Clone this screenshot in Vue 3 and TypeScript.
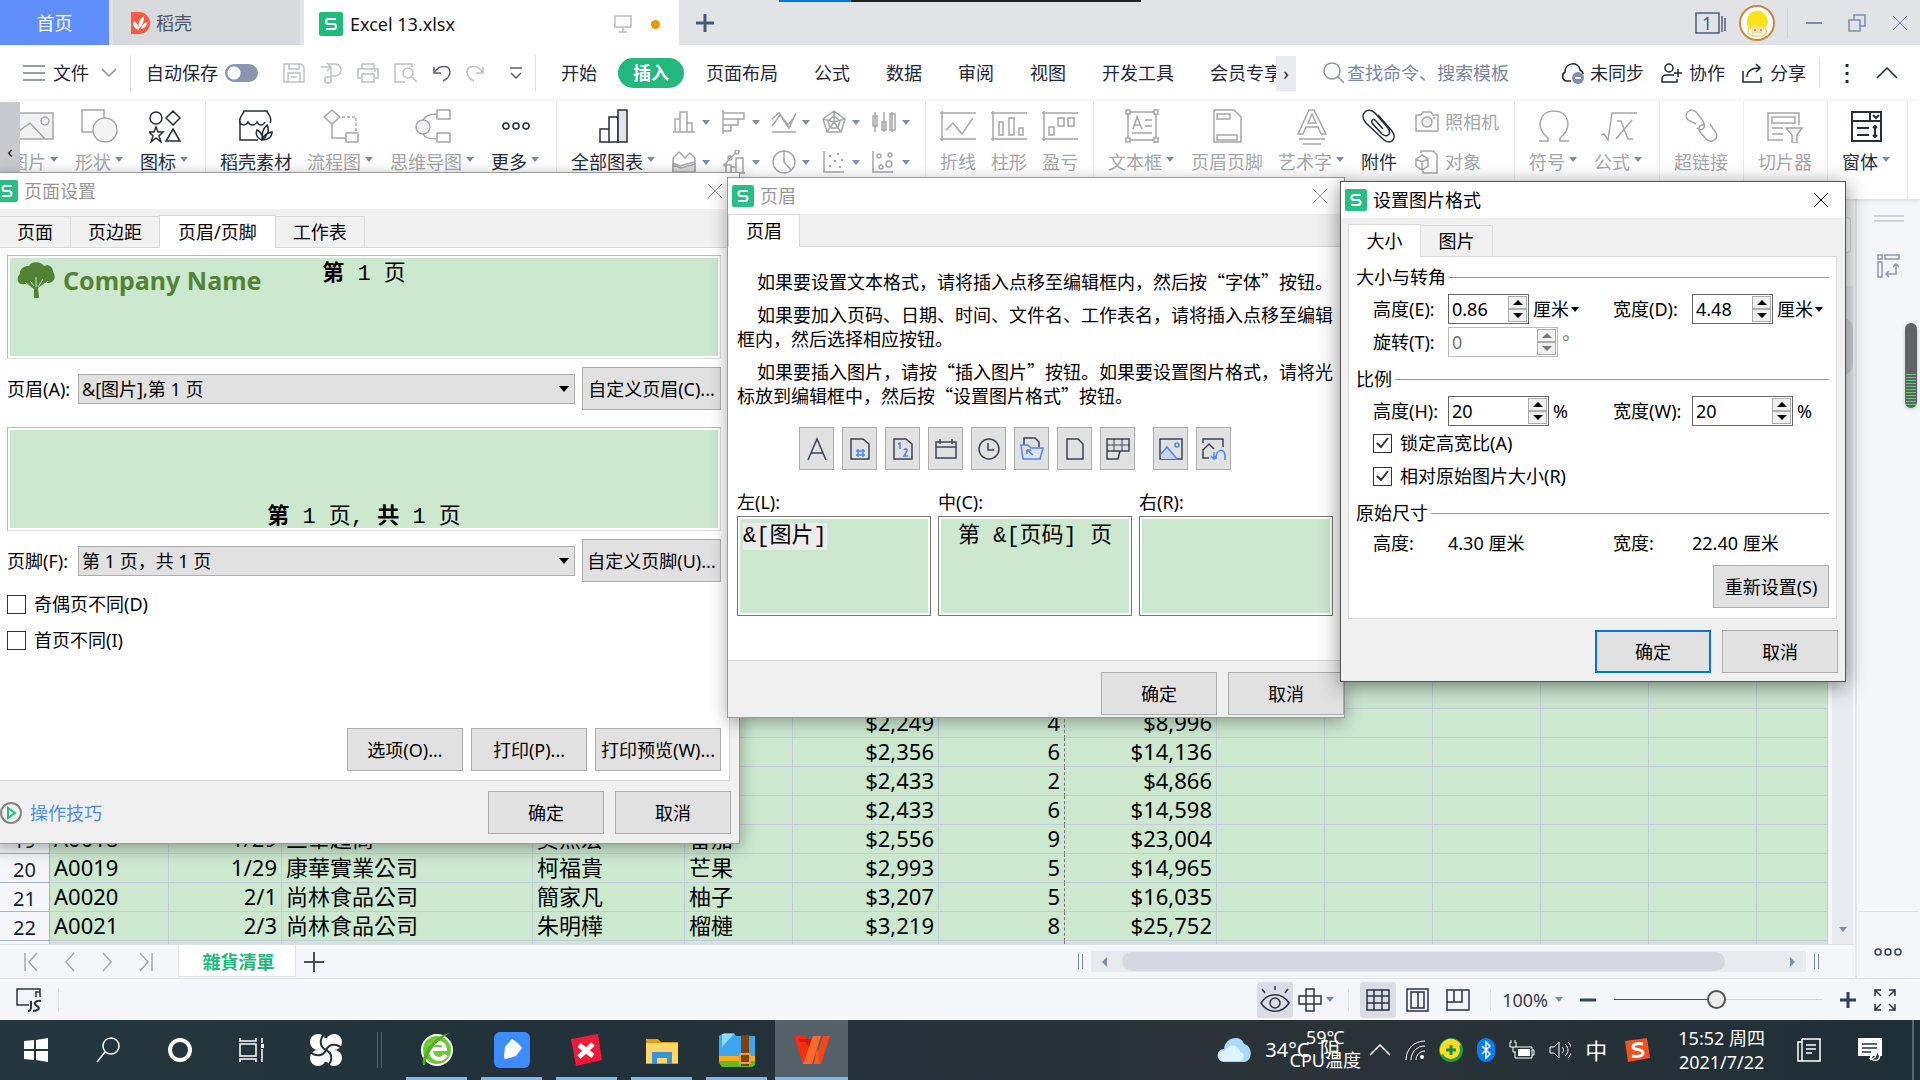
<script setup lang="ts">
import { h, ref, type FunctionalComponent } from 'vue'

type IconDef = [number, number, string]

const icons: Record<string, IconDef> = {
  wps: [24, 24, '<rect width="24" height="24" rx="2" fill="#20bb7c" stroke="none"/><path d="M17 7H9.500a2.500 2.500 0 0 0 0 5h5a2.500 2.500 0 0 1 0 5H7" stroke="#fff" stroke-width="2"/>'],
  wpsS: [22, 22, '<rect width="22" height="22" rx="2" fill="#27c084" stroke="none"/><path d="M16 6H9a2 2 0 0 0 0 5h4a2 2 0 0 1 0 5H6" stroke="#fff" stroke-width="2"/>'],
  docer: [20, 22, '<path d="M1 0h8a11 11 0 0 1 0 22H1z" fill="#fa5a41" stroke="none"/><path d="M9 18C2 16 3 11 4 9c3 2 5 5 5 9zM9 16c-1-5 0-9 5-12 0 5-1 9-4 12zM11 17c1-4 3-6 6-7 0 4-2 6-6 7z" fill="#fff" stroke="none"/>'],
  monitor: [18, 18, '<path d="M1 1h16v11H1zM9 12v5M5 17h8" stroke="#b3bdd4"/>'],
  plus: [20, 20, '<path d="M10 1v18M1 10h18" stroke="#4a5675" stroke-width="3"/>'],
  windows1: [32, 22, '<path d="M1 1h23v20H1zM27 4v16M30 6v13" stroke="#4f5f7f"/>'],
  avatar: [36, 36, '<circle cx="18" cy="18" r="17" fill="#fff" stroke="#c8893d" stroke-width="2"/><path d="M8 20c-2-18 20-20 21-2l-4 6H11z" fill="#ffe11a" stroke="none"/><path d="M12 21l13 1-1 7H13z" fill="#f8dfb0" stroke="none"/><path d="M10 22l-1 6 5 3h10l4-4-2-5" stroke="#e7d878"/><circle cx="16" cy="25" r="1" fill="#b85" stroke="none"/><circle cx="22" cy="25" r="1" fill="#b85" stroke="none"/>'],
  min: [16, 18, '<path d="M0 9h16" stroke="#7c8baa" stroke-width="2"/>'],
  restore: [18, 18, '<path d="M1 6h11v11H1zM6 6V1h11v11h-5" stroke="#7c8baa"/>'],
  close: [16, 16, '<path d="M1 1l14 14M15 1L1 15" stroke-width="1"/>'],
  menu: [22, 16, '<path d="M0 1h22M0 8h22M0 15h22" stroke="#333b4c" stroke-width="1"/>'],
  chevDown: [16, 10, '<path d="M1 1l7 7 7-7"/>'],
  chevUp: [22, 12, '<path d="M1 11L11 1l10 10"/>'],
  save: [22, 20, '<path d="M1 1h17l3 3v15H1zM6 1v5h10V1M5 19v-9h12v9M8 14h6"/>'],
  convert: [22, 22, '<path d="M1 5h9M7 1l4 4-4 4M8 2h7a6 6 0 0 1 0 12h-4v4a3 3 0 1 1-3-3h3V6"/>'],
  print: [22, 20, '<path d="M5 6V1h12v5M4 15H1V6h20v9h-3M5 11h12v8H5zM17 8h2"/>'],
  preview: [24, 20, '<path d="M18 4V1H1v18h10"/><circle cx="14" cy="10" r="5"/><path d="M18 14l5 5"/>'],
  undo: [18, 18, '<path d="M1 3v6h7M1 9C5 1 17 0 17 8c0 4-3 7-7 9"/>'],
  redo: [18, 18, '<path d="M17 3v6h-7M17 9C13 1 1 0 1 8c0 4 3 7 7 9"/>'],
  more: [12, 12, '<path d="M0 1h12M1 6l5 5 5-5"/>'],
  search: [22, 22, '<circle cx="9" cy="9" r="8"/><path d="M15 15l6 6"/>'],
  cloud: [24, 22, '<path d="M11 19H6a5 5 0 0 1-1-9C5 0 19-1 20 8c2 1 3 3 3 4"/><circle cx="18" cy="16" r="6" fill="#7f8ea9" stroke="none"/><path d="M15 16h6" stroke="#fff" stroke-width="2"/>'],
  coop: [22, 20, '<circle cx="8" cy="5" r="4"/><path d="M13 12H5a4 4 0 0 0-4 4v3h15v-3M17 6v8M13 10h8"/>'],
  share: [22, 20, '<path d="M1 8v11h18v-5M5 14c0-6 4-9 13-9M14 1l4 4-4 4"/>'],
  dots: [4, 20, '<path d="M2 1v3M2 9v3M2 17v3" stroke-width="3"/>'],
  pic: [44, 34, '<path d="M1 4h39v26H1zM1 26l16-12 15 16" fill="#f1f1f1"/><circle cx="32" cy="12" r="4"/>'],
  shape: [38, 34, '<path d="M1 1h22v22H1z"/><circle cx="24" cy="21" r="12" fill="#f4f4f4"/>'],
  glyphs: [32, 34, '<circle cx="7" cy="9" r="6"/><path d="M24 2l7 7-7 7-7-7zM7 18l2 5h5l-4 4 2 6-5-4-5 4 2-6-4-4h5zM24 20l7 12H17z"/>'],
  store: [36, 34, '<path d="M2 15V31h18M2 15c-2-7 3-9 4-13h23c1 4 6 6 3 12M2 12c0 5 6 5 8 1 2 4 7 4 9 0 2 4 6 4 8 0M24 31c-7-3-6-8-5-10 4 2 6 5 5 10 0-5 0-11 5-15 3 5 0 12-5 15 1-4 4-7 10-8 0 5-4 8-10 8z"/>'],
  flow: [36, 34, '<path d="M9 1l8 7-8 7-8-7z" fill="#f1f1f1"/><path d="M19 8h14v15" stroke-dasharray="3 2"/><path d="M9 15v14h14M23 24h12v9H23z"/>'],
  mind: [36, 34, '<circle cx="8" cy="18" r="7" fill="#f1f1f1"/><path d="M22 1h13v9H22zM22 24h13v9H22zM8 11c2-4 7-6 14-6M8 25c2 4 7 5 14 5"/>'],
  ooo: [28, 34, '<circle cx="4" cy="17" r="3"/><circle cx="14" cy="17" r="3"/><circle cx="24" cy="17" r="3"/>'],
  charts: [30, 34, '<path d="M1 20h9v13H1zM10 8h9v25h-9z"/><path d="M19 1h9v32h-9z" fill="#e2e4e9"/>'],
  s1: [24, 24, '<path d="M1 22h22M3 22V9h5v13M8 22V2h7v20M15 22v-9h5v9"/>'],
  s2: [24, 24, '<path d="M1 0v24M1 3h21v6H1M1 9h15v6H1M1 15h8v6H1"/>'],
  s3: [24, 24, '<path d="M0 16l8-11 9 13 7-15M0 9l7-6 9 12 7-9M0 22h24"/>'],
  s4: [24, 24, '<path d="M12 1l11 8-4 13H5L1 9zM12 6l6 5-2 7H8l-2-7zM12 1v11M23 9l-11 3M19 22l-7-10M5 22l7-10M1 9l11 3"/>'],
  s5: [24, 24, '<path d="M3 2v20M1 6h4v10H1zM12 2v20M10 12h4v8h-4zM20 2v20M18 4h5v16h-5z"/>'],
  s6: [24, 24, '<path d="M1 22V8l6-6 6 6 5-5 5 5v14zM1 13l7 3 7-2 8-2"/><path d="M1 15l8 3 14-4v8H1z" fill="#ddd"/>'],
  s7: [24, 24, '<path d="M2 16L8 8l6-5M1 23h22M4 23v-8h5v8M9 23v-6h5v6M14 23V8h7v15"/><circle cx="3" cy="15" r="1"/><circle cx="8" cy="8" r="2"/><circle cx="15" cy="2" r="2"/>'],
  s8: [24, 24, '<circle cx="12" cy="12" r="11"/><path d="M12 1v11l7 8"/>'],
  s9: [24, 24, '<path d="M2 1v21h20"/><path d="M7 6h2M15 4h2M12 11h2M19 10h2M7 16h2M17 17h2" stroke-width="2"/>'],
  s10: [24, 24, '<path d="M1 1v21h20"/><circle cx="7" cy="6" r="2"/><circle cx="18" cy="5" r="2"/><circle cx="9" cy="17" r="2"/><circle cx="17" cy="14" r="3"/>'],
  line: [36, 34, '<path d="M0 4h36M0 30h36M2 2v30M6 21l7-7 9 11L33 9"/>'],
  column: [36, 34, '<path d="M0 4h36M0 30h36M2 2v30M8 26V13h4v13zM18 26V9h5v17zM28 26v-7h4v7z"/>'],
  winloss: [36, 34, '<path d="M0 4h36M0 30h36M2 2v30M7 18h5v8H7zM16 9h6v8h-6zM26 9h6v8h-6z"/>'],
  textbox: [34, 34, '<path d="M5 3h24M5 31h24M3 5v24M31 5v24M8 20l4-12 5 12M9 16h6M20 11h7M20 17h7M7 24h20"/><path d="M1 1h4v4H1zM29 1h4v4h-4zM1 29h4v4H1zM29 29h4v4h-4z" fill="#fff"/>'],
  hf: [30, 34, '<path d="M2 1h20l7 7v25H2zM5 5h13v5H5zM5 26h20v5H5z"/>'],
  art: [32, 36, '<path d="M2 25L13 1h5l12 24h-5l-3-7H10l-3 7zM12 14h8l-4-9zM3 30h26M7 35h18"/>'],
  clip: [36, 34, '<path d="M17 6l14 16c6 8-2 15-9 8L5 14C-3 5 7-3 14 4l13 15c4 6-1 10-6 6L11 14c-1-3 1-4 3-3l8 9"/>'],
  camera: [24, 24, '<path d="M1 5h5l2-3h8l2 3h5v16H1z"/><circle cx="12" cy="12" r="5" fill="#eee"/><path d="M18 8h2"/>'],
  object: [24, 24, '<path d="M6 3V1h12l4 4v18H8v-2M1 9l6-4 6 4v7l-6 4-6-4zM1 9l6 3 6-3M7 12v8"/>'],
  omega: [32, 34, '<path d="M1 32h9v-3C-3 19 1 2 16 2s19 17 6 27v3h9"/>'],
  formula: [36, 34, '<path d="M0 26l3-1 4 6L11 4h25M16 12h4l7 18h5M31 11L15 30"/>'],
  link: [34, 34, '<path d="M12 15L4 11C-2 4 8-3 13 4l6 8c4 7-2 11-6 7M21 16c-6-1-8 4-4 8l5 6c5 5 13 0 10-6l-6-9"/>'],
  slicer: [36, 34, '<path d="M16 31H1V4h31v12M5 8h23v6H5zM5 19h11M5 25h11"/><path d="M19 19h16l-5 7v8h-5v-8z" fill="#f1f1f1"/>'],
  form: [32, 34, '<path d="M1 3h29v29H1zM1 12h29M19 3v9M6 19h12M6 26h12M24 17v11M22 19l2-2 2 2M22 26l2 2 2-2M22 6l3 3 3-3" stroke-width="2"/>'],
  bA: [24, 24, '<path d="M3 23L12 2l9 21M6 16h12"/>'],
  bPage: [24, 24, '<path d="M3 2h12l6 5v15H3z"/><path d="M8 14h9M8 18h9M10 12v8M15 12v8" stroke="#4a86f7"/>'],
  bPages: [24, 24, '<path d="M3 2h12l6 5v15H3z"/><path d="M7 7l2-1v6M13 13c1-2 4-1 3 1l-3 5h4" stroke="#4a86f7"/>'],
  bDate: [24, 24, '<path d="M2 5h20v16H2zM2 10h20M6 2v5M18 2v5"/>'],
  bTime: [24, 24, '<circle cx="12" cy="12" r="10"/><path d="M11 6v7h6"/>'],
  bPath: [24, 24, '<path d="M4 8V1h11l4 4v5"/><path d="M1 8h7l3 3h12l-3 11H3zM7 13l6 5M7 13v4M7 13h4" stroke="#4a86f7"/>'],
  bFile: [24, 24, '<path d="M4 2h11l5 5v15H4z"/>'],
  bSheet: [24, 24, '<path d="M1 14V2h22v12h-9l-2 8H1v-8h22"/><path d="M1 8h22M8 2v12M16 2v12" stroke-width="1"/>'],
  bPic: [24, 24, '<path d="M1 2h22v20H1z"/><path d="M2 17l6-7 10 12H2z" stroke="none" fill="#c9d5ea"/><path d="M2 17l6-7 10 12" stroke="#4a86f7"/><circle cx="18" cy="8" r="2" stroke="#4a86f7"/>'],
  bFmt: [24, 24, '<path d="M1 6V2h20v8M1 12v9h6M1 13l6-6 5 5"/><path d="M12 15v7M9 19l3 3 2-3M14 22c0-11 9-11 9-3v4" stroke="#4a86f7"/>'],
  tree: [38, 36, '<path d="M17 36h5l-1-10 7-5c9 1 12-6 8-11 0-6-5-8-9-6-3-5-13-5-15 0C6 3 2 9 3 12c-5 5-2 12 6 10l8 5z" fill="#548235" stroke="none"/><path d="M8 20l9 8M31 19l-10 9M19 15v10M13 19l4 5M26 17l-5 8" stroke="#cce8cf" stroke-width="1"/>'],
  tips: [22, 22, '<circle cx="11" cy="11" r="10" stroke="#858585" stroke-width="2"/><path d="M8 6v10l7-5z" stroke="#27bd83" stroke-width="2"/>'],
  lines: [30, 8, '<path d="M0 1h30M0 6h30" stroke="#d0d3d8" stroke-width="2"/>'],
  swap: [24, 24, '<path d="M1 1h4v4H1zM8 1h14v4H8zM1 8h4v15H1zM19 10v10h-9M16 13l3-3 3 3M12 17l-3 3 3 3" stroke="#8d9ab0"/>'],
  first: [14, 20, '<path d="M1 1v18M13 1L5 10l8 9"/>'],
  prev: [10, 20, '<path d="M9 1L1 10l8 9"/>'],
  next: [10, 20, '<path d="M1 1l8 9-8 9"/>'],
  last: [14, 20, '<path d="M13 1v18M1 1l8 9-8 9"/>'],
  add: [20, 20, '<path d="M10 0v20M0 10h20" stroke-width="2"/>'],
  js: [26, 24, '<path d="M13 17H1V1h23v8M20 9V4h4"/><path d="M15 13v6c0 3-1 4-3 4M25 13c-6-1-8 3-4 5s1 5-4 5" stroke-width="2"/>'],
  eye: [30, 30, '<path d="M1 18c7-11 21-11 28 0-7 11-21 11-28 0z"/><circle cx="15" cy="18" r="5"/><path d="M15 1v4M2 4l3 4M28 4l-3 4"/>'],
  cross: [24, 24, '<path d="M8 1h8v22H8zM1 8h22v8H1z"/>'],
  table: [24, 22, '<path d="M1 1h22v20H1zM1 7h22M1 14h22M8 1v20M16 1v20"/>'],
  page: [24, 24, '<path d="M1 1h21v22H1zM5 4h13v16H5zM12 4v16"/>'],
  breaks: [24, 22, '<path d="M1 1h22v20H1zM1 13h15V1M8 1v12"/>'],
  minus: [16, 18, '<path d="M0 9h16" stroke="#34405b" stroke-width="3"/>'],
  zoomIn: [16, 18, '<path d="M0 9h16M8 1v16" stroke="#34405b" stroke-width="3"/>'],
  expand: [22, 22, '<path d="M1 7V1h6M1 1l6 6M15 1h6v6M21 1l-6 6M1 15v6h6M1 21l6-6M21 15v6h-6M21 21l-6-6"/>'],
  win: [24, 24, '<path d="M0 3l10-1v9H0zM12 2l12-2v11H12zM0 13h10v9L0 21zM12 13h12v11l-12-2z" fill="#fff" stroke="none"/>'],
  find: [24, 26, '<circle cx="15" cy="9" r="8"/><path d="M9 15L1 25"/>'],
  cortana: [24, 24, '<circle cx="12" cy="12" r="10" stroke-width="4"/>'],
  task: [26, 26, '<path d="M1 1v3h16V1M1 7h16v12H1zM1 25v-3h16v3M23 1v5M23 12v13"/><path d="M22 7h3v4h-3z" fill="#fff" stroke="none"/>'],
  pinwheel: [34, 34, '<g fill="#fff" stroke="none"><circle cx="9" cy="9" r="8"/><circle cx="25" cy="9" r="8"/><circle cx="9" cy="25" r="8"/><circle cx="25" cy="25" r="8"/><path d="M9 5h16v24H9z"/></g><g stroke="#24323a" stroke-width="2"><path id="a" d="M17 17C9 13 11 4 17 0M17 17C21 9 30 11 34 17M17 17C25 21 23 30 17 34M17 17C13 25 4 23 0 17"/></g>'],
  ie: [34, 36, '<circle cx="17" cy="18" r="15" fill="#6cc932" stroke="#fff" stroke-width="2"/><path d="M26 23c-5 7-15 4-15-5 0-10 14-9 14-1H12" stroke="#fff" stroke-width="4"/><path d="M3 33C1 20 16 2 31 1c-10 4-23 16-26 32z" fill="#55ad20" stroke="none"/>'],
  blue: [36, 36, '<rect width="36" height="36" rx="6" fill="#3c8cff" stroke="none"/><path d="M18 7c5 3 8 6 10 9l-6 8-10 3c-2 0-2-1-2-3l1-9z" fill="#fff" stroke="none"/>'],
  red: [34, 34, '<path d="M1 6l27-5 4 26-26 6z" fill="#f01937" stroke="none"/><path d="M9 12l14 11M23 11L9 24" stroke="#fff" stroke-width="5"/>'],
  folder: [34, 28, '<path d="M1 3h12l3 3h17v22H1z" fill="#e39b12" stroke="none"/><path d="M1 7h32v20H1z" fill="#ffd768" stroke="none"/><path d="M7 28V16h20v12h-5v-6H12v6z" fill="#3a93d8" stroke="none"/>'],
  zip: [36, 36, '<path d="M0 27h36v6l-3 2H3l-3-4z" fill="#61b925" stroke="none"/><path d="M0 23h36v6H0z" fill="#ffad16" stroke="none"/><path d="M0 4l5-3h10l2 3h19v20H0z" fill="#3ca7ec" stroke="none"/><path d="M3 2h12L3 15z" fill="#8ddcff" stroke="none"/><path d="M22 3h8v31h-8z" fill="#80400f" stroke="none"/><path d="M21 22h10v9H21z" stroke="#dba446" stroke-width="2"/>'],
  wpsW: [36, 30, '<path d="M0 1h12l5 12-4 16H9z" fill="#f52e12" stroke="none"/><path d="M5 4h12l4 9-4 2-6-8H6z" fill="#d81c0a" stroke="none"/><path d="M9 29L19 1h8l-9 28z" fill="#ff6a2a" stroke="none"/><path d="M20 29L29 1h7L27 29z" fill="#f9431a" stroke="none"/><path d="M23 12l3 17h-6z" fill="#ff5a21" stroke="none"/>'],
  weather: [34, 26, '<path d="M7 25c-9-1-8-13 0-13C8 0 24-3 27 7c9 2 9 17 0 18z" fill="#a9daf6" stroke="none"/><path d="M5 24c-6-2-4-11 3-10 2-6 13-8 15 1 6 2 4 8 0 9z" fill="#ddf4ff" stroke="none"/>'],
  wifi: [20, 20, '<path d="M1 20C1 9 9 1 20 1M6 20c0-8 6-14 14-14M11 20c0-5 4-9 9-9" stroke-width="1"/><circle cx="17" cy="17" r="2" fill="#fff" stroke="none"/>'],
  guard: [24, 24, '<circle cx="12" cy="12" r="12" fill="#1c9f54" stroke="none"/><path d="M2 17A11 11 0 1 1 22 7L2 17z" fill="#ffdc1f" stroke="none"/><circle cx="12" cy="12" r="9" fill="#ffdc1f" stroke="none"/><path d="M12 7v10M7 12h10" stroke="#17894a" stroke-width="3"/>'],
  bt: [18, 24, '<rect width="18" height="24" rx="9" fill="#0a7cf2" stroke="none"/><path d="M5 8l8 8-4 4V4l4 4-8 8" stroke="#fff"/>'],
  battery: [26, 20, '<path d="M7 7h16v11H6v-6M23 10h2v5h-2M1 2v5h6V2M2 0v3M6 0v3M4 7v5h3" stroke-width="1"/><path d="M9 9h12v7H9z" fill="#fff" stroke="none"/>'],
  speaker: [22, 20, '<path d="M1 7h4l5-5v16l-5-5H1zM13 7c2 2 2 4 0 6M16 4c4 4 4 8 0 12M19 2c5 5 5 11 0 16" stroke-width="1"/>'],
  sogou: [26, 24, '<path d="M1 3l22-3 3 20-22 4z" fill="#f4501e" stroke="none"/><path d="M19 6c-6-1-10 0-10 3 0 4 10 1 10 6 0 3-5 4-11 3" stroke="#fff" stroke-width="3"/>'],
  notes: [24, 24, '<path d="M5 1h18v22H1V4h4M5 1v22M9 7h10M9 11h10M9 15h6"/>'],
  action: [26, 26, '<path d="M0 1h24v18h-9l-3 5v-5H0z" fill="#fff" stroke="none"/><path d="M4 7h15M4 11h15M4 15h9" stroke="#24323a"/><path d="M18 14c1 5-1 8-5 8 6 4 13-2 5-8z" fill="#24323a" stroke="#fff"/>'],
}

const Ic: FunctionalComponent<{ n: string }> = ({ n }) => {
  const [w, ht, inner] = icons[n]
  return h('svg', {
    width: w, height: ht, viewBox: `0 0 ${w} ${ht}`, fill: 'none', stroke: 'currentColor',
    'stroke-width': 1.5, 'aria-hidden': 'true', style: { display: 'block', flex: 'none' }, innerHTML: inner,
  })
}
Ic.props = ['n']

const menus = ['开始', '插入', '页面布局', '公式', '数据', '审阅', '视图', '开发工具']

interface Tool { k: 'item' | 'sep' | 'charts' | 'pair'; n?: string; t?: string; on?: boolean; c?: boolean }
const sep: Tool = { k: 'sep' }
const item = (n: string, t: string, c = false, on = false): Tool => ({ k: 'item', n, t, c, on })
const tools: Tool[] = [
  item('pic', '图片', true), item('shape', '形状', true), item('glyphs', '图标', true, true), sep,
  item('store', '稻壳素材', false, true), item('flow', '流程图', true), item('mind', '思维导图', true),
  item('ooo', '更多', true, true), sep,
  item('charts', '全部图表', true, true), { k: 'charts' }, sep,
  item('line', '折线'), item('column', '柱形'), item('winloss', '盈亏'), sep,
  item('textbox', '文本框', true), item('hf', '页眉页脚'), item('art', '艺术字', true),
  item('clip', '附件', false, true), { k: 'pair' }, sep,
  item('omega', '符号', true), item('formula', '公式', true), sep,
  item('link', '超链接'), sep, item('slicer', '切片器'), sep, item('form', '窗体', true, true), sep,
]
const smallCharts = ['s1', 's2', 's3', 's4', 's5', 's6', 's7', 's8', 's9', 's10']

const colWidths = [50, 119, 113, 251, 152, 108, 146, 126, 152, 108, 108, 108, 108, 108]
const known: Record<number, string[]> = {
  15: ['', '', '', '', '芝士', '$2,249', '4', '$8,996'],
  16: ['', '', '', '', '', '$2,356', '6', '$14,136'],
  17: ['', '', '', '', '', '$2,433', '2', '$4,866'],
  18: ['', '', '', '', '', '$2,433', '6', '$14,598'],
  19: ['A0018', '1/29', '三華超商', '吳杰宏', '番茄', '$2,556', '9', '$23,004'],
  20: ['A0019', '1/29', '康華實業公司', '柯福貴', '芒果', '$2,993', '5', '$14,965'],
  21: ['A0020', '2/1', '尚林食品公司', '簡家凡', '柚子', '$3,207', '5', '$16,035'],
  22: ['A0021', '2/3', '尚林食品公司', '朱明樺', '榴槤', '$3,219', '8', '$25,752'],
}
const rows = Array.from({ length: 23 }, (_, i) => ({
  no: i > 17 && i < 22 ? String(i + 1) : '',
  cells: Array.from({ length: 14 }, (_, c) => known[i + 1]?.[c] ?? ''),
}))
const rightCols = [1, 5, 6, 7]

const hfButtons = [
  ['bA', '字体'], ['bPage', '页码'], ['bPages', '总页数'], ['bDate', '日期'], ['bTime', '时间'],
  ['bPath', '路径'], ['bFile', '文件名'], ['bSheet', '工作表名'], ['bPic', '插入图片'], ['bFmt', '设置图片格式'],
]
const left = ref('&[图片]')
const center = ref('第 &[页码] 页')
const right = ref('')
const oddEven = ref(false)
const firstPage = ref(false)
const lockRatio = ref(true)
const relative = ref(true)
const zoom = ref(49)
const h1 = ref('0.86')
const w1 = ref('4.48')
const rot = ref('0')
const h2 = ref('20')
const w2 = ref('20')
const apps = ['ie', 'blue', 'red', 'folder', 'zip', 'wpsW']
</script>

<template>
  <div class="screen">
    <header class="tabs">
      <button class="tab home">首页</button>
      <button class="tab docer"><Ic n="docer" />稻壳</button>
      <div class="tab file"><Ic n="wps" /><span class="fname">Excel 13.xlsx</span><Ic n="monitor" /><i class="dirty"></i></div>
      <button class="newtab" aria-label="新建"><Ic n="plus" /></button>
      <div class="winctl">
        <span class="count"><Ic n="windows1" /><b>1</b></span>
        <Ic n="avatar" /><i class="vline"></i>
        <button aria-label="最小化"><Ic n="min" /></button>
        <button aria-label="还原"><Ic n="restore" /></button>
        <button aria-label="关闭"><Ic n="close" /></button>
      </div>
      <div class="strip"></div>
    </header>

    <nav class="menubar">
      <button class="filebtn"><Ic n="menu" />文件<span class="faint"><Ic n="chevDown" /></span></button>
      <i class="vline"></i>
      <label class="auto">自动保存<input type="checkbox" class="toggle" /></label>
      <div class="quick">
        <Ic n="save" /><Ic n="convert" /><Ic n="print" /><Ic n="preview" />
        <span class="dark"><Ic n="undo" /></span><Ic n="redo" /><span class="dark drop"><Ic n="more" /></span>
      </div>
      <i class="vline"></i>
      <div class="menus">
        <button v-for="m in menus" :key="m" :class="{ cur: m === '插入' }">{{ m }}</button>
        <button class="cut">会员专享</button>
      </div>
      <button class="scroll" aria-label="更多选项卡">›</button>
      <label class="find"><Ic n="search" /><input type="text" placeholder="查找命令、搜索模板" aria-label="查找命令" /></label>
      <div class="acct">
        <button><Ic n="cloud" />未同步</button>
        <button><Ic n="coop" />协作</button>
        <button><Ic n="share" />分享</button>
        <i class="vline"></i>
        <Ic n="dots" /><Ic n="chevUp" />
      </div>
    </nav>

    <section class="ribbon">
      <template v-for="(t, i) in tools" :key="i">
        <i v-if="t.k === 'sep'" class="rsep"></i>
        <button v-else-if="t.k === 'item'" class="tool" :class="{ on: t.on }">
          <span class="pic"><Ic :n="t.n!" /></span>
          <span class="lab">{{ t.t }}<i v-if="t.c" class="caret"></i></span>
        </button>
        <div v-else-if="t.k === 'charts'" class="small">
          <button v-for="s in smallCharts" :key="s" :aria-label="s"><Ic :n="s" /><i class="caret"></i></button>
        </div>
        <div v-else class="pair">
          <button><Ic n="camera" />照相机</button>
          <button><Ic n="object" />对象</button>
        </div>
      </template>
      <button class="rscroll" aria-label="向左">‹</button>
    </section>

    <main class="work">
      <div class="book">
        <div class="fbar"><div class="fbox"></div></div>
        <div class="gridrow">
          <div class="gridbox">
            <table class="grid">
              <colgroup><col v-for="(w, i) in colWidths" :key="i" :style="{ width: w + 'px' }" /><col /></colgroup>
              <thead><tr><th v-for="c in 15" :key="c"></th></tr></thead>
              <tbody>
                <tr v-for="(r, k) in rows" :key="k">
                  <th>{{ r.no }}</th>
                  <td v-for="(c, i) in r.cells" :key="i" :class="{ num: rightCols.includes(i), brk: i === 6 }">{{ c }}</td>
                </tr>
              </tbody>
            </table>
          </div>
          <div class="vscroll"><div class="vthumb"></div><i class="caret"></i></div>
        </div>
        <div class="sheets">
          <div class="snav"><Ic n="first" /><Ic n="prev" /><Ic n="next" /><Ic n="last" /></div>
          <button class="sheet">雜貨清單</button>
          <button class="addsheet" aria-label="新建工作表"><Ic n="add" /></button>
          <i class="grip"></i>
          <div class="hscroll"><i class="la"></i><div class="hthumb"></div><i class="ra"></i></div>
          <i class="grip end"></i>
        </div>
      </div>
      <aside class="side">
        <Ic n="lines" /><Ic n="swap" />
        <div class="sidefoot"><Ic n="ooo" /></div>
      </aside>
    </main>

    <footer class="status">
      <span class="js"><Ic n="js" /></span>
      <div class="views">
        <button class="sel" aria-label="护眼模式"><Ic n="eye" /></button>
        <button class="frz" aria-label="阅读模式"><Ic n="cross" /><i class="caret"></i></button>
        <i class="vline"></i>
        <button class="sel" aria-label="普通视图"><Ic n="table" /></button>
        <button class="vb" aria-label="页面布局"><Ic n="page" /></button>
        <button class="vb" aria-label="分页预览"><Ic n="breaks" /></button>
        <i class="vline"></i>
        <button class="pct">100%<i class="caret"></i></button>
        <button aria-label="缩小"><Ic n="minus" /></button>
        <input v-model="zoom" class="zoom" type="range" min="0" max="100" aria-label="缩放" />
        <button aria-label="放大"><Ic n="zoomIn" /></button>
        <button class="full" aria-label="全屏"><Ic n="expand" /></button>
      </div>
    </footer>

    <section class="dlg d1" aria-label="页面设置">
      <div class="title off"><Ic n="wpsS" /><span>页面设置</span><button aria-label="关闭"><Ic n="close" /></button></div>
      <div class="dtabs">
        <button>页面</button><button>页边距</button><button class="act">页眉/页脚</button><button>工作表</button>
      </div>
      <div class="body">
        <div class="pv">
          <div class="logo"><Ic n="tree" /><span>Company Name</span></div>
          <p class="mono"><b>第</b> 1 页</p>
        </div>
        <div class="field">
          <label for="hd">页眉(A):</label>
          <select id="hd"><option>&amp;[图片],第 1 页</option></select>
          <button class="btn wide">自定义页眉(C)...</button>
        </div>
        <div class="pv foot"><p class="mono"><b>第</b> 1 页, <b>共</b> 1 页</p></div>
        <div class="field">
          <label for="ft">页脚(F):</label>
          <select id="ft"><option>第 1 页，共 1 页</option></select>
          <button class="btn wide">自定义页脚(U)...</button>
        </div>
        <label class="chk"><input v-model="oddEven" type="checkbox" />奇偶页不同(D)</label>
        <label class="chk"><input v-model="firstPage" type="checkbox" />首页不同(I)</label>
        <div class="acts">
          <button class="btn">选项(O)...</button><button class="btn">打印(P)...</button><button class="btn mid">打印预览(W)...</button>
        </div>
      </div>
      <div class="dfoot">
        <a href="#"><Ic n="tips" />操作技巧</a>
        <button class="btn">确定</button><button class="btn">取消</button>
      </div>
    </section>

    <section class="dlg d2" aria-label="页眉">
      <div class="title off"><Ic n="wpsS" /><span>页眉</span><button aria-label="关闭"><Ic n="close" /></button></div>
      <div class="dtabs"><button class="act">页眉</button></div>
      <div class="body">
        <p>如果要设置文本格式，请将插入点移至编辑框内，然后按“字体”按钮。</p>
        <p>如果要加入页码、日期、时间、文件名、工作表名，请将插入点移至编辑框内，然后选择相应按钮。</p>
        <p>如果要插入图片，请按“插入图片”按钮。如果要设置图片格式，请将光标放到编辑框中，然后按“设置图片格式”按钮。</p>
        <div class="hfb">
          <button v-for="b in hfButtons" :key="b[0]" :class="{ gap: b[0] === 'bPic' }" :aria-label="b[1]"><Ic :n="b[0]" /></button>
        </div>
        <div class="areas">
          <label>左(L):<textarea v-model="left" class="picked"></textarea></label>
          <label>中(C):<textarea v-model="center" class="ctr"></textarea></label>
          <label>右(R):<textarea v-model="right"></textarea></label>
        </div>
      </div>
      <div class="dfoot"><button class="btn">确定</button><button class="btn">取消</button></div>
    </section>

    <section class="dlg d3" aria-label="设置图片格式">
      <div class="title"><Ic n="wpsS" /><span>设置图片格式</span><button aria-label="关闭"><Ic n="close" /></button></div>
      <div class="dtabs"><button class="act">大小</button><button>图片</button></div>
      <div class="body">
        <h3>大小与转角</h3>
        <div class="form">
          <label for="h1">高度(E):</label>
          <div class="cell">
            <span class="spin"><input id="h1" v-model="h1" type="text" /><span class="ud"><button aria-label="增加"></button><button aria-label="减少"></button></span></span>
            厘米<i class="caret blk"></i>
          </div>
          <label for="w1">宽度(D):</label>
          <div class="cell">
            <span class="spin"><input id="w1" v-model="w1" type="text" /><span class="ud"><button aria-label="增加"></button><button aria-label="减少"></button></span></span>
            厘米<i class="caret blk"></i>
          </div>
          <label for="rot">旋转(T):</label>
          <div class="cell">
            <span class="spin dis"><input id="rot" v-model="rot" type="text" disabled /><span class="ud"><button aria-label="增加" disabled></button><button aria-label="减少" disabled></button></span></span>
            <span class="deg">°</span>
          </div>
        </div>
        <h3>比例</h3>
        <div class="form tight">
          <label for="h2">高度(H):</label>
          <div class="cell">
            <span class="spin pc"><input id="h2" v-model="h2" type="text" /><span class="ud"><button aria-label="增加"></button><button aria-label="减少"></button></span></span>%
          </div>
          <label for="w2">宽度(W):</label>
          <div class="cell">
            <span class="spin pc"><input id="w2" v-model="w2" type="text" /><span class="ud"><button aria-label="增加"></button><button aria-label="减少"></button></span></span>%
          </div>
        </div>
        <label class="chk"><input v-model="lockRatio" type="checkbox" />锁定高宽比(A)</label>
        <label class="chk"><input v-model="relative" type="checkbox" />相对原始图片大小(R)</label>
        <h3 class="orig">原始尺寸</h3>
        <div class="form"><span>高度:</span><span>4.30 厘米</span><span>宽度:</span><span>22.40 厘米</span></div>
        <button class="btn reset">重新设置(S)</button>
      </div>
      <div class="dfoot"><button class="btn def">确定</button><button class="btn">取消</button></div>
    </section>

    <div class="meter"><div></div></div>

    <footer class="taskbar">
      <button class="tb" aria-label="开始"><Ic n="win" /></button>
      <button class="tb" aria-label="搜索"><Ic n="find" /></button>
      <button class="tb" aria-label="Cortana"><Ic n="cortana" /></button>
      <button class="tb" aria-label="任务视图"><Ic n="task" /></button>
      <button class="tb" aria-label="浏览器"><Ic n="pinwheel" /></button>
      <i class="tsep"></i>
      <button v-for="a in apps" :key="a" class="app" :class="{ cur: a === 'wpsW' }" :aria-label="a"><Ic :n="a" /></button>
      <div class="tray">
        <Ic n="weather" />
        <span class="temp">34°C&nbsp; 阴<span class="cpu">59℃<br />CPU温度</span></span>
        <span class="up"><Ic n="chevUp" /></span>
        <Ic n="wifi" /><Ic n="guard" /><Ic n="bt" /><Ic n="battery" /><Ic n="speaker" />
        <span class="ime">中</span><Ic n="sogou" />
        <time>15:52 周四<br />2021/7/22</time>
        <Ic n="notes" /><span class="msg"><Ic n="action" /></span>
      </div>
    </footer>
  </div>
</template>

<style>
body { overflow: hidden; }
</style>

<style scoped>
.screen, .screen * { box-sizing: border-box; }
.screen {
  position: relative; display: flex; flex-direction: column; height: 100vh; overflow: hidden;
  font: 400 18px/24px "Noto Sans", "Noto Sans CJK SC", sans-serif; color: #1f2636; background: #fff;
}
button, input, select, textarea { font: inherit; color: inherit; }
button { border: 0; padding: 0; background: none; white-space: nowrap; }
i { font-style: normal; flex: none; }
p, h3 { margin: 0; font-weight: inherit; }
.vline { width: 1px; height: 36px; background: #dfe1e6; }
.caret { display: inline-block; border: 4px solid transparent; border-top: 5px solid #7f8ba8; border-bottom: 0; }

.tabs { position: relative; flex: none; height: 45px; display: flex; background: #e2e3e7; }
.tab { display: flex; align-items: center; }
.home { width: 109px; justify-content: center; background: #608efa; color: #fff; margin-right: 4px; }
.docer { width: 187px; padding-left: 17px; gap: 6px; background: #d9dade; color: #4b5468; margin-right: 4px; }
.file { width: 375px; background: #fff; padding: 3px 19px 0 15px; gap: 7px; }
.fname { flex: 1; color: #111; }
.dirty { width: 9px; height: 9px; border-radius: 50%; background: #e99700; margin-left: 12px; }
.newtab { margin-left: 16px; }
.strip { position: absolute; left: 779px; top: 0; width: 362px; height: 2px; background: linear-gradient(90deg, #0078d7 72px, #222 72px); }
.winctl { margin-left: auto; display: flex; align-items: center; padding-right: 12px; color: #7c8baa; }
.winctl button { margin-left: 26px; }
.winctl .vline { height: 30px; margin: 0 -8px 0 12px; background: #cdd0d6; }
.count { position: relative; margin-right: 12px; }
.count b { position: absolute; left: 7px; top: -1px; font-weight: 400; color: #4f5f7f; }

.menubar { flex: none; height: 56px; display: flex; align-items: center; padding-left: 23px; }
.filebtn { display: flex; align-items: center; gap: 8px; }
.faint { color: #8a8f99; margin-left: 4px; }
.menubar > .vline { margin-left: 13px; }
.auto { display: flex; align-items: center; gap: 7px; margin-left: 15px; }
.toggle { appearance: none; margin: 0; width: 33px; height: 18px; border-radius: 9px; background: radial-gradient(circle at 9px 9px, #fff 6px, #8a96b0 7px); }
.quick { display: flex; align-items: center; gap: 15px; margin-left: 25px; color: #c0c1c3; }
.dark { color: #5b6275; }
.drop { margin-left: 11px; }
.menus { display: flex; align-items: center; margin-left: 7px; width: 733px; overflow: hidden; }
.menus button { padding: 0 18px; flex: none; }
.menus .cur { background: #23b97e; color: #fff; font-weight: 700; padding: 3px 15px; border-radius: 15px; margin: 0 4px 0 3px; }
.scroll { width: 20px; height: 35px; background: #e8ebf0; }
.find { display: flex; align-items: center; gap: 2px; margin-left: 27px; color: #8896b0; }
.find input { border: 0; outline: 0; width: 175px; padding: 0; background: none; }
.find input::placeholder { color: #7a87a2; opacity: 1; }
.acct { margin-left: auto; display: flex; align-items: center; padding-right: 22px; gap: 17px; }
.acct button { display: flex; align-items: center; gap: 6px; }
.acct .vline { margin: 0 8px 0 -4px; height: 30px; }
.acct > :last-child { margin-left: 10px; }

.ribbon { position: relative; z-index: 1; flex: none; height: 98px; display: flex; gap: 15px; padding-left: 10px; overflow: hidden; background: #fff; box-shadow: 0 1px 5px #0002; }
.rsep { width: 1px; margin-right: -1px; background: #ebecef; }
.tool { flex: none; display: flex; flex-direction: column; padding-top: 8px; color: #a6a7aa; }
.tool.on { color: #262d3d; }
.pic { align-self: center; height: 34px; margin-bottom: 7px; }
.lab { display: flex; }
.lab .caret { margin: 7px 2px 0 4px; }
.small { flex: none; display: grid; grid-template-columns: repeat(5, 38px); column-gap: 12px; row-gap: 16px; align-content: start; padding-top: 9px; color: #a6a7aa; }
.small button { display: flex; align-items: center; gap: 6px; }
.pair { flex: none; display: flex; flex-direction: column; gap: 16px; padding: 9px 0 0 3px; color: #a6a7aa; }
.pair button { display: flex; align-items: center; gap: 6px; }
.rscroll { position: absolute; left: 0; top: 1px; width: 20px; bottom: 0; background: #c8cacf; }

.work { flex: 1 1 0; min-height: 0; display: flex; background: #f5f6f9; }
.book { flex: 1; min-width: 0; display: flex; flex-direction: column; }
.fbar { flex: none; height: 73px; padding: 18px 4px 19px 80px; }
.fbox { height: 36px; border: 1px solid #d4d7de; border-radius: 4px; background: #fff; }
.gridrow { flex: 1; min-height: 0; display: flex; border-bottom: 1px solid #e0e2e7; }
.gridbox { flex: 1; min-width: 0; overflow: hidden; }
.grid { width: 100%; table-layout: fixed; border-collapse: separate; border-spacing: 0; font-size: 22px; line-height: 26px; color: #000; background: #cce8cf; font-family: "Noto Sans", "Noto Sans CJK TC", sans-serif; }
.grid thead th { height: 31px; background: #f5f6f9; }
.grid tr > * { height: 29px; padding: 0 4px 2px; border-right: 1px solid #c5cadf; border-bottom: 1px solid #c5cadf; text-align: left; white-space: nowrap; overflow: hidden; }
.grid tbody th { padding: 3px 4px 0; line-height: 24px; background: #f5f6f9; text-align: center; font-size: 20px; font-weight: 400; color: #14203a; border-color: #a6b0c8; }
.grid .num { text-align: right; }
.grid .brk { border-right: 1px dashed #777; }
.vscroll { width: 21px; margin: 14px 2px 0 4px; background: #e8eaef; display: flex; flex-direction: column; align-items: center; justify-content: space-between; padding: 32px 0 12px; }
.vthumb { width: 20px; height: 57px; border-radius: 10px; background: #d0d3dc; }
.sheets { flex: none; height: 34px; display: flex; align-items: center; border-bottom: 1px solid #dfe1e6; }
.snav { display: flex; gap: 27px; padding-left: 24px; width: 178px; color: #a5a8ae; }
.sheet { width: 118px; height: 32px; align-self: flex-start; padding-left: 3px; background: #fff; border: 1px solid #e1e3e8; border-top: 0; color: #1fb97b; font-weight: 700; font-family: "Noto Sans CJK TC", sans-serif; }
.addsheet { margin-left: 8px; color: #4a5062; }
.grip { width: 5px; height: 15px; border: 1px solid #7f8ba8; border-width: 0 1px; margin-left: auto; }
.hscroll { width: 715px; height: 21px; margin: 0 8px; background: #e8eaef; display: flex; align-items: center; }
.la, .ra { border: 5px solid transparent; border-right-color: #7f8ba8; border-left: 0; margin: 0 15px 0 11px; }
.ra { border-left: 5px solid #7f8ba8; border-right: 0; margin: 0 11px 0 auto; }
.hthumb { width: 603px; height: 19px; border-radius: 10px; background: #d5d8e0; }
.end { margin: 0 36px 0 0; }
.side { width: 65px; border-left: 2px solid #e3e5ea; display: flex; flex-direction: column; align-items: center; gap: 31px; padding-top: 16px; border-bottom: 1px solid #dfe1e6; }
.sidefoot { margin-top: auto; width: 59px; height: 67px; border-top: 1px solid #dfe1e6; padding: 23px 0 0 15px; color: #34405b; }

.status { flex: none; height: 41px; display: flex; align-items: center; background: #f5f6f9; color: #2b3246; }
.js { padding: 0 16px; border-right: 1px solid #dfe1e6; }
.views { margin-left: auto; display: flex; align-items: center; padding-right: 24px; }
.sel { width: 36px; height: 36px; border-radius: 3px; background: #d9dde5; display: flex; align-items: center; justify-content: center; }
.frz { display: flex; align-items: center; gap: 4px; margin-left: 5px; }
.views .vline { height: 22px; margin: 0 11px 0 14px; }
.vb { margin-left: 10px; width: 30px; }
.pct { display: flex; align-items: center; gap: 7px; margin-right: 17px; color: #3a3b45; }
.zoom { appearance: none; width: 208px; height: 20px; margin: 0 18px; background: linear-gradient(90deg, #43506a 49%, #d0d2d8 49%) center / 100% 1px no-repeat; }
.zoom::-webkit-slider-thumb { appearance: none; width: 19px; height: 19px; border-radius: 50%; border: 2px solid #555; background: #ececec; }
.full { margin-left: 18px; }

.dlg { position: absolute; z-index: 2; display: flex; flex-direction: column; background: #f0f0f0; border: 1px solid #999; box-shadow: 0 4px 16px #0005; color: #000; }
.d1 { left: -5px; top: 172px; width: 745px; height: 672px; }
.d2 { left: 727px; top: 177px; width: 618px; height: 541px; z-index: 3; }
.d3 { left: 1340px; top: 181px; width: 506px; height: 501px; z-index: 4; border-color: #555; box-shadow: 0 4px 20px #0007; }
.title { flex: none; height: 36px; display: flex; align-items: center; gap: 6px; padding: 0 16px 0 4px; background: #fff; }
.title button { margin-left: auto; }
.off { color: #999; }
.d1 .title { padding-left: 0; }
.dtabs { flex: none; display: flex; align-items: flex-end; border-bottom: 1px solid #d9d9d9; }
.dtabs button { height: 31px; padding: 0 17px; border: 1px solid #d9d9d9; border-bottom: 0; margin-right: -1px; }
.dtabs .act { height: 33px; margin-bottom: -1px; background: #fff; position: relative; }
.d1 .dtabs { height: 39px; padding-left: 3px; }
.d1 .dtabs .act { padding: 0 18px; }
.d2 .dtabs { height: 33px; }
.d3 .dtabs { height: 39px; margin: 0 8px 0 7px; }
.d3 .dtabs button { width: 73px; }
.body { flex: 1; background: #fff; border-bottom: 1px solid #d9d9d9; }
.btn { flex: none; width: 116px; height: 43px; border: 1px solid #adadad; background: #e1e1e1; }
.btn.wide { width: 139px; }
.btn.mid { width: 126px; }
.dfoot { flex: none; display: flex; justify-content: flex-end; gap: 11px; }
.d1 .body { margin-right: 9px; padding: 7px 8px 9px 11px; border-right: 1px solid #d9d9d9; display: flex; flex-direction: column; }
.pv { position: relative; height: 104px; border: 1px solid #b5cdb8; border-color: #a9c4ad #dcdcdc #dcdcdc #a9c4ad; background: #cce8cf; box-shadow: inset 0 0 0 2px #fff; display: flex; justify-content: center; padding: 7px 0 0; }
.logo { position: absolute; left: 9px; top: 6px; display: flex; gap: 8px; color: #548235; font: 700 25px/36px "Noto Sans", sans-serif; }
.mono { font: 400 22px/24px "Liberation Mono", "Noto Sans CJK SC", monospace; }
.foot { align-items: flex-end; }
.field { position: relative; display: flex; align-items: center; gap: 7px; margin: 8px 0 17px; }
.field label { width: 64px; white-space: nowrap; }
select { appearance: none; flex: 1; height: 30px; padding: 0 3px; border: 1px solid #adadad; border-radius: 0; background: #e1e1e1; color: #000; }
.field::after { content: ""; position: absolute; right: 152px; top: 19px; border: 5px solid transparent; border-top: 6px solid #000; border-bottom: 0; }
.chk { display: flex; align-items: center; gap: 8px; }
.chk input { appearance: none; width: 19px; height: 19px; margin: 0; border: 1px solid #333; background: #fff; }
.chk input:checked { background: #fff url("data:image/svg+xml,%3Csvg xmlns='http://www.w3.org/2000/svg' viewBox='0 0 17 17'%3E%3Cpath d='M3 8l4 4 7-9' fill='none' stroke='%23333' stroke-width='2'/%3E%3C/svg%3E"); }
.d1 .chk { margin: -7px 0 19px; height: 24px; }
.acts { margin-top: auto; display: flex; justify-content: flex-end; gap: 8px; }
.d1 .dfoot { height: 62px; align-items: center; padding: 1px 8px 0 0; }
.dfoot a { display: flex; align-items: center; gap: 8px; margin: 0 auto 0 4px; color: #4c8dee; text-decoration: none; }
.d2 .body { padding: 22px 9px 0; }
.d2 p { font-family: "Noto Sans CJK SC", sans-serif; text-indent: 20px; margin-bottom: 9px; width: 600px; }
.hfb { display: flex; gap: 8px; margin: 20px 0 0 62px; }
.hfb button { width: 35px; height: 43px; border: 1px solid #adadad; background: #e1e1e1; color: #3b4459; display: flex; align-items: center; justify-content: center; }
.hfb .gap { margin-left: 10px; }
.areas { display: flex; gap: 7px; margin-top: 20px; padding-right: 2px; }
.areas label { flex: 1; display: block; }
textarea { display: block; width: 100%; height: 100px; resize: none; overflow: hidden; outline: 0; margin-top: 2px; padding: 7px 5px; border: 1px solid #777; background: #cce8cf; box-shadow: inset 0 0 0 2px #fff; font: 400 22px/26px "Liberation Mono", "Noto Sans CJK SC", monospace; }
.picked { background: linear-gradient(#ececec, #ececec) 5px 6px / 84px 27px no-repeat #cce8cf; }
.ctr { text-align: center; }
.d2 .dfoot { height: 56px; padding: 11px 0 0; }
.d3 .body { margin: 0 8px 0 7px; border: 1px solid #d9d9d9; border-top: 0; padding: 8px 7px 8px 7px; display: flex; flex-direction: column; }
h3 { display: flex; align-items: center; gap: 3px; font-size: 18px; line-height: 24px; }
h3::after { content: ""; flex: 1; height: 1px; background: #999; }
.form { display: grid; grid-template-columns: 75px 165px 79px 1fr; row-gap: 3px; padding: 5px 0 10px 17px; align-items: center; white-space: nowrap; }
.form.tight { padding-bottom: 5px; }
.cell { display: flex; align-items: center; gap: 4px; }
.spin { display: flex; width: 81px; height: 30px; border: 1px solid #666; background: #fff; }
.spin input { flex: 1; min-width: 0; border: 0; outline: 0; padding: 0 3px; background: none; }
.spin.dis { width: 110px; border-color: #bbb; color: #777; }
.spin.pc { width: 101px; }
.ud { width: 19px; margin: 1px; display: flex; flex-direction: column; }
.ud button { flex: 1; border: 1px solid #adadad; background: #f0f0f0; display: flex; align-items: center; justify-content: center; }
.ud button::before { content: ""; border: 5px solid transparent; border-bottom: 5px solid #000; border-top: 0; }
.ud button + button::before { border-top: 5px solid #000; border-bottom: 0; }
.ud button:disabled::before { opacity: .5; }
.deg { color: #888; }
.blk { border-top-color: #000; margin-left: -2px; }
.d3 .chk { padding-left: 17px; margin-bottom: 9px; }
.d3 .chk + .orig { margin-top: 4px; }
.orig + .form { padding: 6px 0 10px 17px; }
.d3 .reset { align-self: flex-end; }
.d3 .dfoot { height: 62px; padding: 11px 7px 0 0; }
.btn.def { border: 2px solid #0078d7; }

.meter { position: absolute; z-index: 2; right: 3px; top: 323px; width: 12px; height: 85px; border-radius: 6px; background: #606265; padding: 51px 1px 2px; box-shadow: 0 1px 4px #0003; }
.meter div { height: 32px; background: repeating-linear-gradient(#4bd667 0 1px, transparent 1px 3px); }

.taskbar { flex: none; height: 60px; display: flex; align-items: stretch; background: linear-gradient(90deg, #24363f, #22313a 30%, #2a3337 70%, #1f2f37); color: #fff; }
.tb { width: 72px; display: flex; align-items: center; justify-content: center; color: #fff; }
.tb:nth-child(5) { width: 76px; }
.tsep { width: 5px; height: 36px; align-self: center; border: 1px solid #55626a; border-width: 0 1px; margin: 0 24px 0 13px; }
.app { width: 61px; margin-right: 14px; display: flex; align-items: center; justify-content: center; border-bottom: 3px solid #76b9ed; padding-top: 3px; }
.app.cur { width: 73px; margin-left: -6px; background: #56626a; }
.tray { margin-left: auto; display: flex; align-items: center; gap: 14px; padding-right: 6px; }
.temp { position: relative; font-size: 20px; width: 90px; white-space: nowrap; }
.cpu { position: absolute; left: 20px; top: -12px; width: 80px; text-align: center; font-size: 18px; line-height: 23px; }
.ime { font-size: 22px; margin-right: 3px; }
time { text-align: center; margin: 0 18px 0 14px; }
.msg { margin-left: 23px; padding-right: 28px; border-right: 2px solid #5a666d; height: 60px; display: flex; align-items: center; }
</style>
